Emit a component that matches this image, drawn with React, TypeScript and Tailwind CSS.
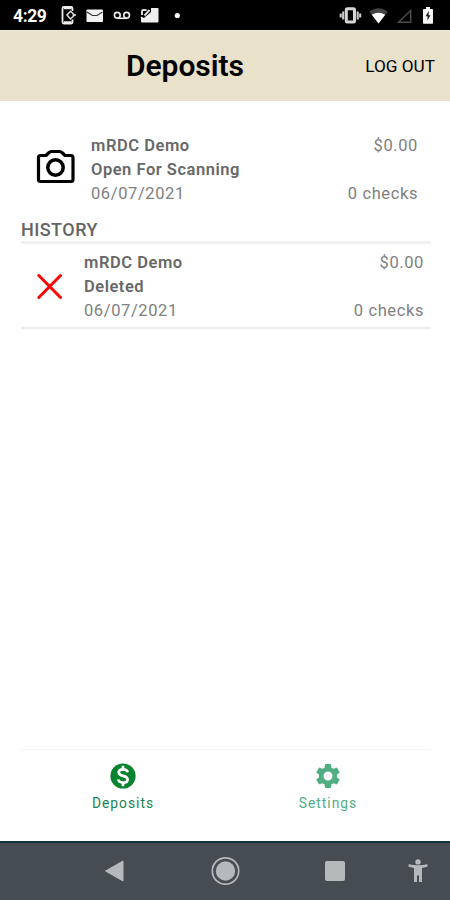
import React from "react";
import { MdSettings } from "react-icons/md";

function StatusBar() {
  return (
    <div className="flex h-[30px] shrink-0 items-center bg-black pl-[13px] text-white">
      <span className="w-[48px] pt-[3px] text-[17.500px] font-bold leading-none tracking-[-0.400px]">4:29</span>
      <svg className="shrink-0" width="130" height="30" viewBox="61 0 130 30" fill="none">
        <path d="M72.500 11V8.500a1.500 1.500 0 0 0-1.500-1.500H64a1.500 1.500 0 0 0-1.500 1.500v13.500a1.500 1.500 0 0 0 1.500 1.500h7a1.500 1.500 0 0 0 1.500-1.500v-2.500" stroke="#eee" strokeWidth="1.800" />
        <path d="M64 8h7.500M64 22.500h7.500" stroke="#eee" strokeWidth="2.500" />
        <path d="M70.500 11.300l4 3.700-4 4-3.500-4z" stroke="#ddd" strokeWidth="1.500" />
        <path d="M72.500 15h3.500" stroke="#ddd" strokeWidth="1.500" />
        <rect x="86.500" y="9.500" width="16.500" height="12.500" rx="0.800" fill="#f2f2f2" />
        <path d="M87 12l5.500 3.500h4.500l5.500-3.500" stroke="#333" strokeWidth="1.200" />
        <circle cx="117.300" cy="15.300" r="2.900" stroke="#eee" strokeWidth="1.600" />
        <circle cx="126.600" cy="15.300" r="2.900" stroke="#eee" strokeWidth="1.600" />
        <path d="M117.300 18.300h9.300" stroke="#eee" strokeWidth="1.600" />
        <path d="M151 8h6.500q1 0 1 1v12.500q0 1-1 1H142q-1 0-1-1V16.500l3 1.500 7-6z" fill="#eee" />
        <path d="M142 15v-3.500q0-1.500 1.500-1.500h3M144.500 15.500l5-5.500" stroke="#ddd" strokeWidth="1.900" />
        <circle cx="177.300" cy="15.500" r="2.600" fill="#fff" />
      </svg>
      <svg className="ml-auto mr-[11px] shrink-0" width="100" height="30" viewBox="339 0 100 30" fill="none">
        <path d="M340.700 13.500v4M343.200 11.500v8M360.200 13.500v4M357.700 11.500v8" stroke="#ccc" strokeWidth="2.100" />
        <rect x="346.300" y="8.800" width="8.200" height="13.200" rx="1" stroke="#d6d6d6" strokeWidth="3" />
        <path d="M378.500 23.500L369.300 12Q378.500 4.500 387.700 12z" fill="#444" />
        <path d="M378.500 23.500L371.800 14.800Q378.500 10.500 385.200 14.800z" fill="#fff" />
        <path d="M398.500 22.200L410.700 10.500v11.700z" stroke="#4a4a4a" strokeWidth="1.500" />
        <path d="M426 7h4v2h2.200q.8 0 .8.800V23q0 .8-.8.800h-8.400q-.8 0-.8-.8V9.800q0-.8.800-.8h2.200z" fill="#f5f5f5" />
        <path d="M428.700 11l-3.200 5.200h2v4.300l3-5.300h-1.800z" fill="#222" />
      </svg>
    </div>
  );
}

function Header() {
  return (
    <header className="flex h-[71px] shrink-0 items-center justify-between border-t border-[#f1ebcd] bg-[#e9e1ca] pl-[126px] pr-[15px] text-black">
      <h1 className="text-[30px] font-semibold leading-none tracking-[-0.050px]">Deposits</h1>
      <button className="whitespace-nowrap pt-[1px] text-[17.200px] leading-none">LOG OUT</button>
    </header>
  );
}

function Deposit({ status }: { status: string }) {
  return (
    <div className="flex flex-1 justify-between text-[16.500px] leading-[24px] tracking-[0.600px] text-[#808080]">
      <div>
        <div className="font-semibold tracking-[0.550px] text-[#686868]">mRDC Demo</div>
        <div className="font-semibold tracking-[0.520px] text-[#686868]">{status}</div>
        <div>06/07/2021</div>
      </div>
      <div className="flex flex-col justify-between text-right">
        <div>$0.00</div>
        <div>0 checks</div>
      </div>
    </div>
  );
}

function NavigationBar() {
  return (
    <div className="h-[59px] shrink-0 border-t-2 border-[#173341] bg-[#464d52]">
      <div className="flex h-[56px] items-center pl-[103px]">
        <svg width="24" height="24" viewBox="0 0 24 24"><path d="M2.500 12L20 2v20z" fill="#b4babb" stroke="#b4babb" strokeLinejoin="round" /></svg>
        <svg className="ml-[83px]" width="30" height="30" viewBox="0 0 30 30"><circle cx="15.500" cy="15" r="13.200" fill="none" stroke="#b4babb" strokeWidth="1.700" /><circle cx="15.500" cy="15" r="9.700" fill="#b4babb" /></svg>
        <div className="ml-[85px] size-[20px] rounded-[2px] bg-[#b4babb]" />
        <svg className="ml-[62px]" width="22" height="24" viewBox="0 0 22 24" fill="#b4babb">
          <circle cx="11" cy="2.900" r="2.700" />
          <path d="M1.500 5.200Q11 7.300 20.500 5.200V7.800L15 9V23h-3v-6.500h-2V23H7V9L1.500 7.800z" />
        </svg>
      </div>
    </div>
  );
}

export default function App() {
  return (
    <div className="flex h-[900px] w-[450px] flex-col overflow-hidden bg-white font-[Roboto,sans-serif]">
      <StatusBar />
      <Header />
      <main className="flex flex-1 flex-col pl-[21px] pr-[19px] pt-[33px]">
        <div className="flex pl-[15px] pr-[13px]">
          <svg className="mr-[16px] mt-[13px] shrink-0" width="39" height="38" viewBox="0 0 39 38" fill="none" stroke="#000">
            <path d="M4.500 8.500H10l2.500-2.500q1.500-1.500 3-1.500h8q1.500 0 3 1.500l2.500 2.500h6q2 0 2 2v22q0 2-2 2H4.500q-2 0-2-2v-22q0-2 2-2z" strokeWidth="3.200" strokeLinejoin="round" />
            <circle cx="19.500" cy="20.500" r="7.700" strokeWidth="3.500" />
          </svg>
          <Deposit status="Open For Scanning" />
        </div>
        <h2 className="mt-[11px] h-[26px] whitespace-nowrap text-[18px] font-medium leading-[25px] tracking-[0.450px] text-[#646464]">HISTORY</h2>
        <div className="mt-[-2px] flex border-b-2 border-t-[3px] border-[#ebebeb] border-t-[#f1f1f1] pb-[4px] pl-[15px] pr-[7px] pt-[7px]">
          <svg className="mr-[22px] mt-[21px] shrink-0" width="26" height="28" viewBox="0 0 26 28" fill="none"><path d="M2.800 3.500L24.500 25.500M24.500 3.500L2.800 25.500" stroke="#fb0505" strokeWidth="3" strokeLinecap="round" /></svg>
          <Deposit status="Deleted" />
        </div>
        <nav className="mt-auto grid h-[92px] grid-cols-2 border-t border-[#f5f5f5] text-[13.800px] leading-[16px] tracking-[1px]">
          <div className="flex flex-col items-center pr-[1px] pt-[13px] text-[#188252]">
            <svg width="26" height="26" viewBox="0 0 26 26" fill="none">
              <circle cx="13" cy="13" r="12.600" fill="#07822f" />
              <path d="M17.700 9.300Q17 6.400 13 6.400T8.700 9.500C8.700 14 17.600 11.800 17.600 16.400Q17.600 19.600 13.200 19.600T8.300 16.400M13 2.800v3.600M13 19.500v3.700" stroke="#fff" strokeWidth="2.700" />
            </svg>
            <span className="mt-[6px]">Deposits</span>
          </div>
          <div className="flex flex-col items-center pr-[1px] pt-[11px] text-[#50ad84]">
            <MdSettings className="size-[30px]" />
            <span className="mt-[4px]">Settings</span>
          </div>
        </nav>
      </main>
      <NavigationBar />
    </div>
  );
}
